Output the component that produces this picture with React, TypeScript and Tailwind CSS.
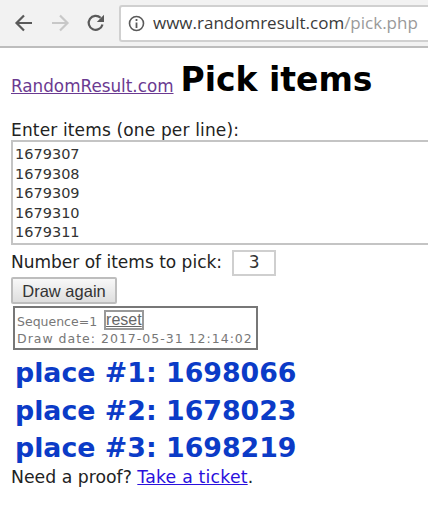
import React from "react";

const sans = "font-['DejaVu_Sans',sans-serif]";

function Toolbar() {
  return (
    <div className="flex h-[48px] items-center border-b-2 border-[#bdbdbd] bg-[#f2f2f2] pl-[14px]">
      <svg width="20" height="20" viewBox="0 0 20 20" fill="none" stroke="#5a5a5a" strokeWidth="2.2">
        <path d="M18 10H3M10 2.5 2.5 10l7.5 7.5" />
      </svg>
      <svg className="ml-[16px]" width="20" height="20" viewBox="0 0 20 20" fill="none" stroke="#c8c8c8" strokeWidth="2.2">
        <path d="M2 10h15M10 2.5 17.5 10 10 17.5" />
      </svg>
      <svg className="ml-[16px]" width="20" height="20" viewBox="0 0 20 20" fill="none">
        <path d="M16.5 11.5A7 7 0 1 1 14.6 4.8" stroke="#5a5a5a" strokeWidth="2.2" />
        <path d="M18 1.8V9h-7.2z" fill="#5a5a5a" />
      </svg>
      <div className="ml-[13px] flex h-[37px] flex-1 items-center rounded-l-[3px] border-y-2 border-l-2 border-[#d0d0d0] bg-white pl-[7px]">
        <svg width="17" height="17" viewBox="0 0 17 17" fill="none" stroke="#5a5a5a">
          <circle cx="8.5" cy="8.5" r="7" strokeWidth="1.6" />
          <path d="M8.5 7.5V13" strokeWidth="1.8" />
          <path d="M8.5 4v2" strokeWidth="1.8" />
        </svg>
        <span className="ml-[8px] whitespace-nowrap font-['Open_Sans',sans-serif] text-[17px] text-[#3a3a3a]">
          www.randomresult.com<span className="text-[#9a9a9a]">/pick.php</span>
        </span>
      </div>
    </div>
  );
}

export default function App() {
  return (
    <div className={`h-[511px] w-[428px] overflow-hidden bg-white ${sans} text-[#222]`}>
      <Toolbar />
      <div className="pl-[11px]">
        <div className="mt-[8px] flex h-[46px] items-end whitespace-nowrap">
          <a className="mb-[6px] text-[16.8px] leading-[20px] text-[#6b3a91] underline">RandomResult.com</a>
          <h1 className="ml-[7px] text-[33px] leading-[44px] font-bold text-black">Pick items</h1>
        </div>
        <div className="mt-[19px] text-[17px] leading-[19px] tracking-[0.15px]">Enter items (one per line):</div>
        <div className="h-[105px] w-[430px] border-2 border-[#c4c4c4] pt-[3px] pl-[2px] text-[14.5px] leading-[19.5px] text-[#333]">
          <div>1679307</div>
          <div>1679308</div>
          <div>1679309</div>
          <div>1679310</div>
          <div>1679311</div>
        </div>
        <div className="mt-[5px] flex items-center text-[17px]">
          <span>Number of items to pick:</span>
          <div className="ml-[10px] flex h-[26px] w-[44px] items-center justify-center border-2 border-[#cfcfcf] text-[#333]">3</div>
        </div>
        <button className="mt-[1px] block h-[27px] w-[106px] rounded-[2px] border-2 border-[#bdbdbd] bg-gradient-to-b from-[#f8f8f8] to-[#dedede] font-['Liberation_Sans',sans-serif] text-[16.5px] leading-[20px] text-[#333]">
          Draw again
        </button>
        <div className="mt-[2px] ml-[2px] h-[44px] w-[245px] border-2 border-[#777] pl-[2px] text-[12.5px] leading-[17px] text-[#777]">
          <div className="flex h-[22px] items-end">
            <span>Sequence=1</span>
            <a className="ml-[7px] border-2 border-[#999] font-['Liberation_Sans',sans-serif] text-[16px] leading-[16px] text-[#666] underline">reset</a>
          </div>
          <div className="tracking-[1px] whitespace-nowrap">Draw date: 2017-05-31 12:14:02</div>
        </div>
        <div className="mt-[4px] ml-[4px] text-[26.8px] leading-[37.5px] font-bold whitespace-nowrap text-[#0b3bc7]">
          <div>place #1: 1698066</div>
          <div>place #2: 1678023</div>
          <div>place #3: 1698219</div>
        </div>
        <div className="text-[17.3px] leading-[20px]">
          Need a proof? <a className="tracking-[0.2px] text-[#2a10dd] underline">Take a ticket</a>.
        </div>
      </div>
    </div>
  );
}
